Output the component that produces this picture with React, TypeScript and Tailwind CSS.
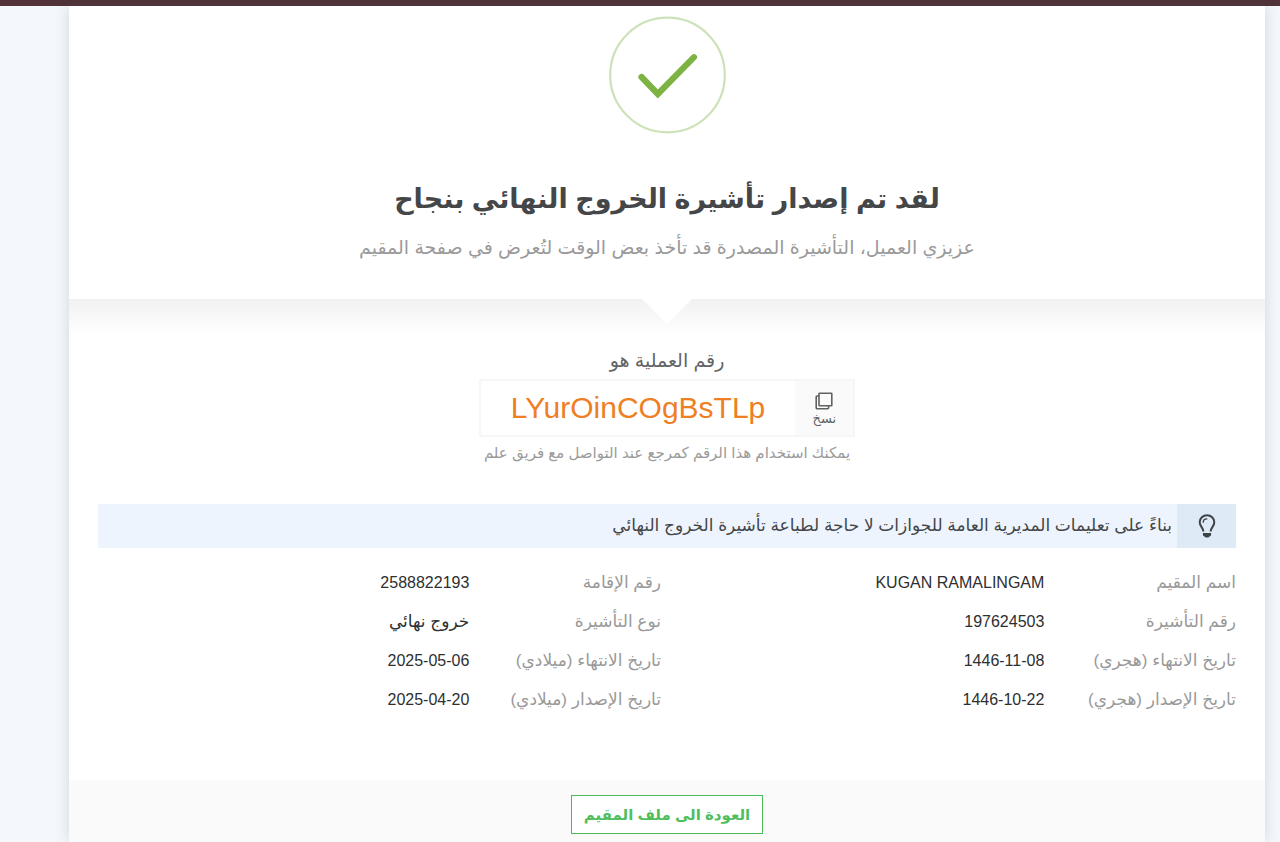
import React, { useState } from 'react';

interface Detail {
  label: string;
  value: string;
}

const details: Detail[] = [
  { label: 'اسم المقيم', value: 'KUGAN RAMALINGAM' },
  { label: 'رقم الإقامة', value: '2588822193' },
  { label: 'رقم التأشيرة', value: '197624503' },
  { label: 'نوع التأشيرة', value: 'خروج نهائي' },
  { label: 'تاريخ الانتهاء (هجري)', value: '1446-11-08' },
  { label: 'تاريخ الانتهاء (ميلادي)', value: '2025-05-06' },
  { label: 'تاريخ الإصدار (هجري)', value: '1446-10-22' },
  { label: 'تاريخ الإصدار (ميلادي)', value: '2025-04-20' },
];

const SuccessIcon: React.FC = () => (
  <svg width="118" height="118" viewBox="0 0 118 118" fill="none" aria-hidden="true">
    <circle cx="59.5" cy="59" r="57.3" stroke="#cde2b8" strokeWidth="2.2" />
    <path d="M33.500 61 49.800 78 86 41.200" stroke="#7cb342" strokeWidth="6.2" strokeLinecap="round" strokeLinejoin="miter" />
  </svg>
);

const CopyIcon: React.FC = () => (
  <svg width="18" height="18" viewBox="0 0 18 18" fill="none" stroke="#5f6163" strokeWidth="1.6" strokeLinejoin="round" aria-hidden="true">
    <rect x="4" y="1.2" width="12.8" height="12.6" rx="0.600" />
    <path d="M4 4H2.2a1 1 0 0 0-1 1v10.7a1 1 0 0 0 1 1h10.4a1 1 0 0 0 1-1v-1.9" />
  </svg>
);

const BulbIcon: React.FC = () => (
  <svg width="18" height="24" viewBox="0 0 18 24" fill="none" stroke="#3d4347" aria-hidden="true">
    <path d="M5.400 17.600C5.400 13.800 1.700 12.400 1.700 8.200a7.300 7 0 0 1 14.600 0c0 4.200-3.700 5.600-3.700 9.400" strokeWidth="2" />
    <path d="M5.2 8.3C5.2 6.3 6.8 4.9 8.8 4.9" strokeWidth="1.3" strokeLinecap="round" />
    <path d="M4.900 19h8.200v1.600c0 1-.5 1.500-1.300 1.700-.5.800-1.500 1.300-2.800 1.300s-2.300-.5-2.800-1.300c-.8-.2-1.300-.7-1.300-1.700Z" fill="#3d4347" stroke="none" />
  </svg>
);

export default function App() {
  const [operationNumber] = useState('LYurOinCOgBsTLp');

  const handleCopy = () => {
    navigator.clipboard?.writeText(operationNumber);
  };

  return (
    <div dir="rtl" lang="ar" className="min-h-screen bg-[#f4f8fd] font-['Liberation_Sans','DejaVu_Sans',sans-serif] flex flex-col overflow-hidden">
      <div className="h-[6px] bg-[#503238]" />

      <main className="flex-1 flex flex-col ms-[15px] me-[69px] bg-white shadow-[0_0_14px_rgba(60,80,90,0.2)]">
        {/* Result */}
        <section className="flex flex-col items-center pt-[10px] h-[293px] text-center">
          <SuccessIcon />
          <h1 className="mt-[45px] text-[27px] leading-[40px] font-bold text-[#444648]">لقد تم إصدار تأشيرة الخروج النهائي بنجاح</h1>
          <p className="mt-4 text-[19px] leading-[26px] text-[#9a9a9a]">عزيزي العميل، التأشيرة المصدرة قد تأخذ بعض الوقت لتُعرض في صفحة المقيم</p>
        </section>

        {/* Operation number */}
        <section className="flex flex-col items-center bg-linear-to-b from-[#f1f1f1] to-white to-[36px]">
          <svg width="50" height="25" viewBox="0 0 50 25" aria-hidden="true">
            <path d="M0 0h50L25 25Z" fill="#fff" />
          </svg>
          <p className="mt-6 text-[19px] leading-[26px] text-[#626466]">رقم العملية هو</p>
          <div className="mt-[5px] flex h-[58px] border-2 border-[#f6f6f6] bg-white">
            <button type="button" onClick={handleCopy} className="w-[58px] flex flex-col items-center justify-center pt-1 bg-[#fafafa] text-[13px] leading-[18px] text-[#626466] cursor-pointer">
              <CopyIcon />
              نسخ
            </button>
            <output className="px-[30px] text-[30px] leading-[54px] text-[#ee7f24]" dir="ltr">{operationNumber}</output>
          </div>
          <p className="mt-[6px] text-[15px] leading-[20px] text-[#9a9a9a]">يمكنك استخدام هذا الرقم كمرجع عند التواصل مع فريق علم</p>
        </section>

        {/* Notice */}
        <section className="mt-[41px] mx-[29px] flex h-[44px] bg-[#edf4fe]">
          <div className="w-[59px] flex items-center justify-center bg-[#dfeaf7]">
            <BulbIcon />
          </div>
          <p className="ps-[5px] text-[17px] leading-[44px] text-[#444648]">بناءً على تعليمات المديرية العامة للجوازات لا حاجة لطباعة تأشيرة الخروج النهائي</p>
        </section>

        {/* Visa details */}
        <dl className="mt-[15px] ps-[29px] pe-[17px] grid grid-cols-2">
          {details.map((item) => (
            <div key={item.label} className="grid grid-cols-3 h-[39px] items-center leading-[24px]">
              <dt className="text-[17px] text-[#999] whitespace-nowrap">{item.label}</dt>
              <dd className={`col-span-2 text-[#2d2f31] ${/^[\w\s-]+$/.test(item.value) ? 'text-[16px]' : 'text-[17px]'}`}>{item.value}</dd>
            </div>
          ))}
        </dl>

        <footer className="mt-[61px] flex-1 flex items-start justify-center bg-[#fafafa] pt-[15px]">
          <button type="button" className="h-[39px] px-3 border border-[#4cb95a] bg-white text-[15px] leading-[24px] font-bold text-[#4fbf5d] cursor-pointer">
            العودة الى ملف المقيم
          </button>
        </footer>
      </main>
    </div>
  );
}
